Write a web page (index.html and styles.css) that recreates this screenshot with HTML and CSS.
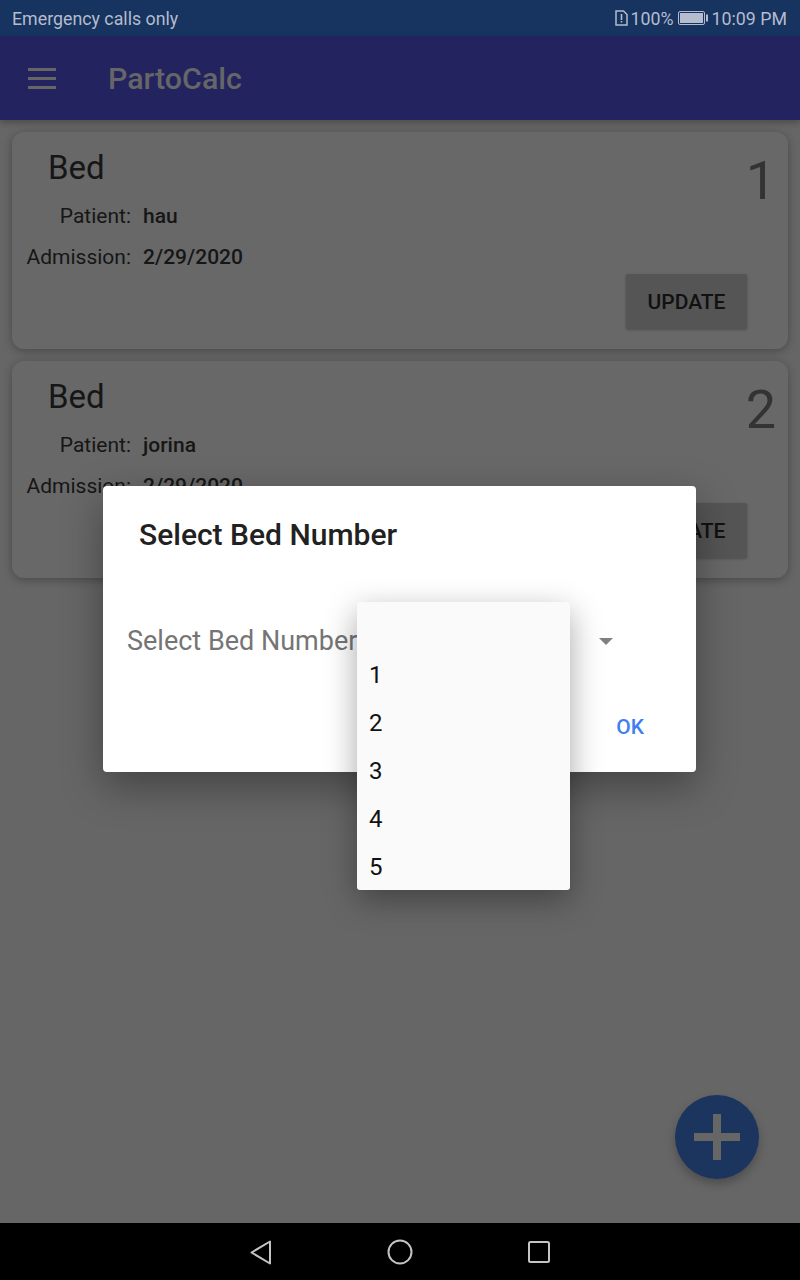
FILE: index.html
```html
<!DOCTYPE html>
<html lang="en">
<head>
<meta charset="utf-8">
<title>PartoCalc</title>
<link rel="stylesheet" href="styles.css">
</head>
<body>
<div class="app">
  <div class="status">
    <span class="status-left">Emergency calls only</span>
    <div class="status-right">
      <svg class="sim" width="13" height="16" viewBox="0 0 13 16"><path d="M1 1h7.500L12 4.500V15H1z" fill="none" stroke="#b4bccd" stroke-width="1.500"/><path d="M5.700 4h1.600v6H5.700zM5.700 11h1.600v1.600H5.700z" fill="#b4bccd"/></svg>
      <span class="pct">100%</span>
      <svg class="batt" width="30" height="14" viewBox="0 0 30 14"><rect x="0.500" y="0.500" width="26" height="13" rx="1.500" fill="none" stroke="#b4bccd"/><rect x="2" y="2" width="23" height="10" fill="#b4bccd"/><rect x="28" y="3.500" width="2" height="7" fill="#b4bccd"/></svg>
      <span class="time">10:09 PM</span>
    </div>
  </div>
  <header class="toolbar">
    <div class="burger"><i></i><i></i><i></i></div>
    <span class="app-title">PartoCalc</span>
  </header>
  <main class="list">
    <section class="card">
      <div class="card-main">
        <div class="bed">Bed</div>
        <div class="rows">
          <span class="lbl">Patient:</span><span class="val">hau</span>
          <span class="lbl">Admission:</span><span class="val">2/29/2020</span>
        </div>
      </div>
      <div class="card-side">
        <div class="num">1</div>
        <div class="update">UPDATE</div>
      </div>
    </section>
    <section class="card">
      <div class="card-main">
        <div class="bed">Bed</div>
        <div class="rows">
          <span class="lbl">Patient:</span><span class="val">jorina</span>
          <span class="lbl">Admission:</span><span class="val">2/29/2020</span>
        </div>
      </div>
      <div class="card-side">
        <div class="num">2</div>
        <div class="update">UPDATE</div>
      </div>
    </section>
  </main>
  <nav class="navbar">
    <svg class="nav-back" width="24" height="28" viewBox="0 0 24 28"><path d="M21 3.500V25.500L2.500 14.500z" fill="none" stroke="#c4c4c4" stroke-width="2" stroke-linejoin="round"/></svg>
    <svg width="26" height="26" viewBox="0 0 26 26"><circle cx="13" cy="13" r="11.500" fill="none" stroke="#c4c4c4" stroke-width="2"/></svg>
    <svg width="24" height="24" viewBox="0 0 24 24"><rect x="2" y="2" width="20" height="20" rx="1.500" fill="none" stroke="#c4c4c4" stroke-width="2"/></svg>
  </nav>

  <button class="fab" type="button"><svg width="46" height="46" viewBox="0 0 46 46"><path d="M19 0h8v19h19v8H27v19h-8V27H0v-8h19z" fill="#666"/></svg></button>

  <div class="dialog">
    <h2 class="dlg-title">Select Bed Number</h2>
    <div class="dlg-field">
      <span class="placeholder">Select Bed Number</span>
      <span class="arrow"></span>
    </div>
    <div class="dlg-actions"><span class="ok">OK</span></div>
  </div>

  <ul class="menu">
    <li></li><li>1</li><li>2</li><li>3</li><li>4</li><li>5</li>
  </ul>
</div>
</body>
</html>
```
FILE: styles.css
```css
* { box-sizing: border-box; }
html, body { margin: 0; padding: 0; }
body { font-family: Roboto, "Liberation Sans", sans-serif; background: #666; }
.app { position: relative; width: 800px; height: 1280px; display: flex; flex-direction: column; overflow: hidden; background: #666; }

.status { height: 36px; flex: none; background: #17335f; color: #b4bccd; font-size: 17.800px; display: flex; align-items: center; justify-content: space-between; padding: 0 13px 0 12px; }
.status-right { display: flex; align-items: center; }
.sim { margin-right: 3px; }
.pct { margin-right: 4px; }
.batt { margin-right: 4px; }

.toolbar { height: 84px; flex: none; background: #232360; display: flex; align-items: center; padding-left: 28px; box-shadow: 0 3px 6px rgba(0,0,0,.25); position: relative; z-index: 1; }
.burger { width: 28px; display: flex; flex-direction: column; gap: 6px; margin-right: 52px; }
.burger i { display: block; height: 3px; background: #666; }
.app-title { color: #666; font-size: 30.400px; font-weight: 500; }

.list { flex: 1; padding: 12px; display: flex; flex-direction: column; gap: 12px; }
.card { height: 217px; background: #686868; border-radius: 12px; box-shadow: 0 2px 10px rgba(0,0,0,.3); display: flex; justify-content: space-between; color: #161616; }
.card-main { padding: 16px 0 0 14px; }
.bed { font-size: 33px; line-height: 40px; margin-left: 22px; }
.rows { display: grid; grid-template-columns: 105px auto; column-gap: 12px; row-gap: 13px; margin-top: 14px; font-size: 21px; line-height: 28px; }
.lbl { text-align: right; white-space: nowrap; }
.val { font-weight: 500; }
.card-side { display: flex; flex-direction: column; align-items: flex-end; }
.num { font-size: 54px; line-height: 64px; margin: 17px 12px 0 0; color: #333; }
.update { width: 121px; height: 55px; margin: 61px 41px 0 0; background: #555; border-radius: 2px; box-shadow: 0 1px 3px rgba(0,0,0,.25); display: flex; align-items: center; justify-content: center; font-size: 21px; font-weight: 500; color: #111; }

.navbar { height: 57px; flex: none; background: #000; display: flex; align-items: center; justify-content: center; gap: 114px; padding-right: 2px; }
.nav-back { margin-left: 1px; }

.fab { position: absolute; left: 675px; top: 1095px; width: 84px; height: 84px; border: 0; padding: 0; border-radius: 50%; background: #1b355f; display: flex; align-items: center; justify-content: center; box-shadow: 0 5px 10px rgba(0,0,0,.25); }

.dialog { position: absolute; left: 103px; top: 486px; width: 593px; height: 286px; background: #fff; border-radius: 4px; box-shadow: 0 14px 40px rgba(0,0,0,.35); display: flex; flex-direction: column; }
.dlg-title { margin: 30px 0 0 36px; font-size: 30px; line-height: 38px; font-weight: 500; color: #212121; }
.dlg-field { display: flex; align-items: center; justify-content: space-between; height: 40px; margin: 67px 83px 0 24px; }
.placeholder { color: #757575; font-size: 27px; }
.arrow { width: 0; height: 0; border-left: 7px solid transparent; border-right: 7px solid transparent; border-top: 7px solid #808080; }
.dlg-actions { display: flex; justify-content: flex-end; margin: 52px 52px 0 0; }
.ok { color: #3f80f0; font-size: 21px; font-weight: 500; line-height: 28px; }

.menu { position: absolute; left: 357px; top: 602px; width: 213px; height: 288px; margin: 0; padding: 0; list-style: none; background: #fafafa; border-radius: 3px; box-shadow: 0 10px 32px rgba(0,0,0,.35); }
.menu li { height: 48px; line-height: 50px; padding-left: 12px; font-size: 24px; color: #111; }
```
